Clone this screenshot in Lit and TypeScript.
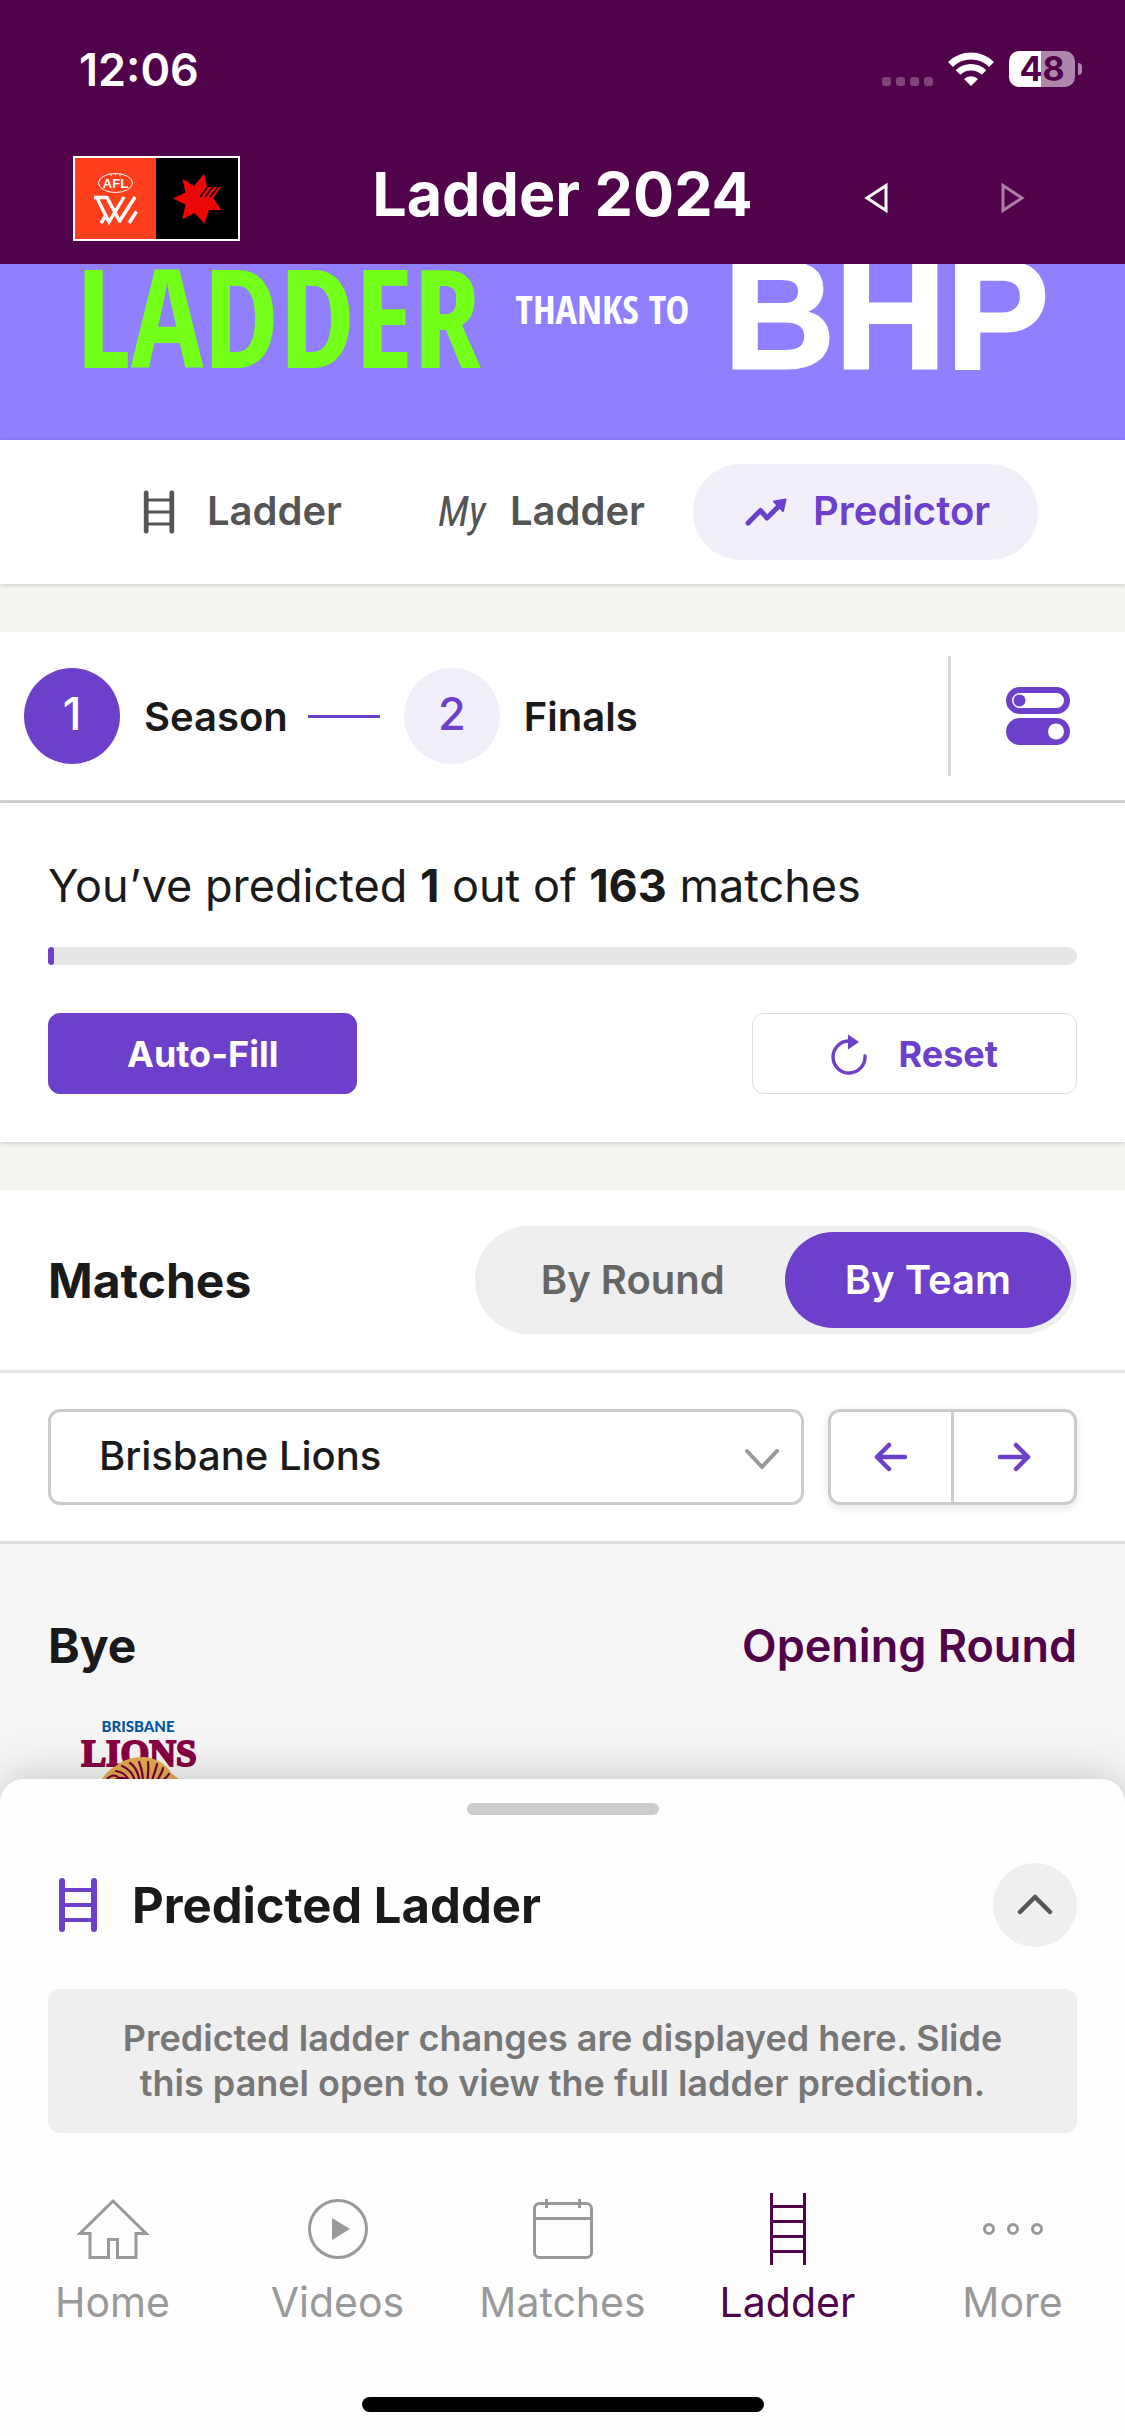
import { LitElement, html, css, svg } from "lit";
import { customElement, property, state } from "lit/decorators.js";
import { classMap } from "lit/directives/class-map.js";

const ladderIcon = html`<svg viewBox="0 0 60 60" fill="none" stroke="currentColor" aria-hidden="true">
  <path d="M14 6V54M46 6V54" stroke-width="6" stroke-linecap="round" />
  <path d="M14 15H46M14 30H46M14 45H46" stroke-width="4" />
</svg>`;

const trendIcon = html`<svg viewBox="0 0 48 48" fill="none" stroke="currentColor" aria-hidden="true">
  <path d="M7 35L19.500 22.500L26 30L39 17" stroke-width="5" stroke-linecap="round" stroke-linejoin="round" />
  <path d="M33 13.500L44.500 11.500L42 23Z" fill="currentColor" stroke-width="2" stroke-linejoin="round" />
</svg>`;

const navIcons: Record<string, unknown> = {
  Home: svg`<path d="M36 8L69 40.500H59V64.500H40.500V46.500H31.500V64.500H13V40.500H3Z" />`,
  Videos: svg`<circle cx="36" cy="36" r="28.500" /><path d="M30 25L48 36L30 47Z" fill="currentColor" stroke="none" />`,
  Matches: svg`<rect x="7.500" y="10.500" width="57" height="54" rx="5" /><path d="M7.500 25.500H64.500M19.500 6V15M52.500 6V15" />`,
  Ladder: svg`<path d="M19.500 0V72M52.500 0V72M19.500 13.500H52.500M19.500 28.500H52.500M19.500 43.500H52.500M19.500 58.500H52.500" />`,
  More: svg`<circle cx="12" cy="36" r="4.500" /><circle cx="36" cy="36" r="4.500" /><circle cx="60" cy="36" r="4.500" />`,
};

@customElement("status-bar")
export class StatusBar extends LitElement {
  static styles = css`
    :host { display: flex; align-items: center; justify-content: space-between; height: 126px; padding: 6px 43px 0 79px; color: #fff; }
    .time { font-size: 45px; font-weight: 600; }
    .signals { display: flex; align-items: center; }
    .dots { display: flex; gap: 5px; margin: 24px 15px 0 0; }
    .dot { width: 9px; height: 9px; border-radius: 3px; background: #7f4579; }
    .wifi { width: 46px; height: 34px; margin-right: 15px; }
    .battery { width: 66px; height: 36px; border-radius: 10px; background: linear-gradient(90deg, #fff 48%, #ae85ab 48%); color: #50034a; font-size: 34px; font-weight: 700; line-height: 36px; text-align: center; }
    .nub { width: 4px; height: 12px; margin-left: 3px; border-radius: 0 4px 4px 0; background: #ae85ab; }
  `;
  render() {
    return html`
      <span class="time">12:06</span>
      <div class="signals">
        <div class="dots">${[0, 1, 2, 3].map(() => html`<span class="dot"></span>`)}</div>
        <svg class="wifi" viewBox="0 0 46 34" fill="none" stroke="#fff" aria-label="Wi-Fi">
          <path d="M2.500 12.500A29 29 0 0 1 43.500 12.500" stroke-width="7" />
          <path d="M10 20.500A18.500 18.500 0 0 1 36 20.500" stroke-width="6.500" />
          <path d="M23 34L16 27A10 10 0 0 1 30 27Z" fill="#fff" stroke="none" />
        </svg>
        <span class="battery">48</span><span class="nub"></span>
      </div>
    `;
  }
}

@customElement("title-bar")
export class TitleBar extends LitElement {
  static styles = css`
    :host { display: grid; grid-template-columns: 1fr auto 1fr; align-items: center; height: 132px; padding: 0 44px 0 73px; color: #fff; }
    .logo { display: block; width: 167px; height: 85px; }
    h1 { margin: 0; padding: 0 29px 8px 0; font-size: 61px; font-weight: 700; line-height: 72px; }
    .pager { display: flex; justify-content: flex-end; }
    button { display: flex; justify-content: center; align-items: center; width: 137px; height: 96px; padding: 0; border: 0; background: none; color: #fff; }
    button:disabled { color: #ab7ea7; }
    .tri { width: 24px; height: 32px; }
    .afl { font: 700 13px "Liberation Sans", sans-serif; }
  `;
  render() {
    return html`
      <a href="#competition" aria-label="Competition">
        <svg class="logo" viewBox="0 0 167 85" aria-hidden="true">
          <rect width="167" height="85" fill="#fff" />
          <rect x="2" y="2" width="81" height="81" fill="#ff3e1d" />
          <rect x="83" y="2" width="82" height="81" fill="#000" />
          <g fill="none" stroke="#fff">
            <ellipse cx="42.500" cy="27" rx="17" ry="9.500" />
            <path d="M38 17.500V20M42.500 17V19.500M47 17.500V20" stroke-width=".7" />
            <path d="M21 41.500H34L47 66M24 42L36 66L51 41M46 66L62 41M28 67L33 59M56 67L63.500 55.500" stroke-width="3.400" />
          </g>
          <text class="afl" x="42.500" y="31.500" text-anchor="middle" fill="#fff">AFL</text>
          <path d="M131 17.700L121 30L109.400 22.700L112.500 36.500L100 42.500L112.500 48.500L109.400 63.300L121.500 57L131.700 67.700L136 54L148.500 54L140 42L148 31H134Z" fill="#ec0606" />
          <path d="M127 41L136 29M132 41L141.500 29M137 41L146.500 29" stroke="#000" stroke-width="1.300" />
        </svg>
      </a>
      <h1>Ladder 2024</h1>
      <div class="pager">
        <button aria-label="Previous season">
          <svg class="tri" viewBox="0 0 24 32" fill="none" stroke="currentColor" stroke-width="3"><path d="M22 3.500V28.500L3 16Z" /></svg>
        </button>
        <button aria-label="Next season" disabled>
          <svg class="tri" viewBox="0 0 24 32" fill="none" stroke="currentColor" stroke-width="3"><path d="M2 3.500V28.500L21 16Z" /></svg>
        </button>
      </div>
    `;
  }
}

@customElement("sponsor-banner")
export class SponsorBanner extends LitElement {
  static styles = css`
    :host { display: flex; align-items: baseline; justify-content: space-between; height: 176px; padding: 0 76px; overflow: hidden; box-sizing: border-box; background: #907fff; color: #fff; white-space: nowrap; }
    .ladder { color: #73ff17; font: 800 136px/102px "Open Sans Condensed", "Roboto Condensed", sans-serif; }
    .thanks { align-self: flex-start; font: 800 40px/90px "Open Sans Condensed", "Roboto Condensed", sans-serif; }
    .bhp { font: 700 154px/102px "Liberation Sans", Arial, sans-serif; -webkit-text-stroke: 3px #fff; }
  `;
  render() {
    return html`<span class="ladder">LADDER</span><span class="thanks">THANKS TO</span><span class="bhp">BHP</span>`;
  }
}

@customElement("view-tabs")
export class ViewTabs extends LitElement {
  @state() private active = "predictor";
  static styles = css`
    :host { display: flex; justify-content: center; padding: 24px 0; background: #fff; box-shadow: 0 1px 5px rgba(0, 0, 0, 0.2); }
    button { display: flex; align-items: center; gap: 24px; height: 96px; padding: 0 48px; border: 0; border-radius: 48px; background: none; color: #555; font: 600 40px Inter, sans-serif; }
    .on { background: #f3effa; color: #6c40ca; }
    .icon { display: flex; justify-content: center; width: 48px; }
    .label { padding-bottom: 4px; }
    svg { width: 48px; height: 48px; }
    .my { font: italic 400 42px/48px "Roboto Condensed", Roboto, sans-serif; }
  `;
  render() {
    const tabs = [
      { id: "ladder", label: "Ladder", icon: ladderIcon },
      { id: "my", label: "Ladder", icon: html`<span class="my">My</span>` },
      { id: "predictor", label: "Predictor", icon: trendIcon },
    ];
    return tabs.map(
      (t) => html`<button class=${classMap({ on: t.id === this.active })} aria-pressed=${t.id === this.active} @click=${() => (this.active = t.id)}>
        <span class="icon">${t.icon}</span><span class="label">${t.label}</span>
      </button>`,
    );
  }
}

@customElement("season-steps")
export class SeasonSteps extends LitElement {
  static styles = css`
    :host { display: flex; align-items: center; height: 168px; padding-left: 24px; border-bottom: 3px solid #d5d5d5; background: #fff; }
    .step { display: flex; align-items: center; gap: 24px; padding: 0; border: 0; background: none; color: #1a1a1a; font: 600 40px Inter, sans-serif; }
    .num { width: 96px; height: 96px; padding-bottom: 4px; box-sizing: border-box; border-radius: 50%; background: #f3effa; color: #6c40ca; font-size: 45px; font-weight: 500; line-height: 92px; text-align: center; }
    .on .num { background: #6c40ca; color: #fff; }
    .link { width: 72px; height: 3px; margin: 0 24px 0 20px; background: #6c40ca; }
    .divider { width: 3px; height: 120px; margin-left: auto; background: #d9d9d9; }
    .settings { display: flex; justify-content: center; width: 174px; padding: 0; border: 0; background: none; color: #6c40ca; }
    .settings svg { width: 64px; height: 59px; }
  `;
  render() {
    return html`
      <button class="step on"><span class="num">1</span>Season</button>
      <span class="link"></span>
      <button class="step"><span class="num">2</span>Finals</button>
      <span class="divider"></span>
      <button class="settings" aria-label="Settings">
        <svg viewBox="0 0 64 59" fill="currentColor">
          <rect x="3" y="3" width="58" height="21" rx="10.500" fill="none" stroke="currentColor" stroke-width="6" />
          <circle cx="13.500" cy="13.500" r="6" />
          <rect y="31" width="64" height="27" rx="13.500" />
          <circle cx="50" cy="44.500" r="8" fill="#fff" />
        </svg>
      </button>
    `;
  }
}

@customElement("prediction-progress")
export class PredictionProgress extends LitElement {
  @property({ type: Number }) done = 1;
  @property({ type: Number }) total = 163;
  static styles = css`
    :host { display: block; padding: 48px; background: #fff; box-shadow: 0 1px 5px rgba(0, 0, 0, 0.2); color: #1a1a1a; }
    p { margin: 0; font-size: 45px; line-height: 70px; }
    .track { height: 18px; margin: 26px 0 48px; border-radius: 3px 9px 9px 3px; background: #e6e6e6; overflow: hidden; }
    .fill { height: 18px; border-radius: 3px; background: #6c40ca; }
    .actions { display: flex; justify-content: space-between; }
    button { display: flex; align-items: center; justify-content: center; gap: 32px; height: 81px; padding: 0 78px; border: 1px solid #ddd; border-radius: 12px; background: #fff; color: #6c40ca; font: 700 36px Inter, sans-serif; }
    .primary { border-color: #6c40ca; background: #6c40ca; color: #fff; }
    svg { width: 36px; height: 42px; }
  `;
  render() {
    return html`
      <p>You’ve predicted <b>${this.done}</b> out of <b>${this.total}</b> matches</p>
      <div class="track" role="progressbar" aria-label="Matches predicted" aria-valuenow=${this.done} aria-valuemax=${this.total}>
        <div class="fill" style="width:${(this.done / this.total) * 100}%"></div>
      </div>
      <div class="actions">
        <button class="primary">Auto-Fill</button>
        <button>
          <svg viewBox="0 0 36 42" fill="none" stroke="currentColor" aria-hidden="true">
            <path d="M18 8A16 16 0 1 0 34 23" stroke-width="3.400" stroke-linecap="round" />
            <path d="M17 1.500L28 9L17 16.500Z" fill="currentColor" stroke="none" />
          </svg>
          Reset
        </button>
      </div>
    `;
  }
}

@customElement("match-filter")
export class MatchFilter extends LitElement {
  @state() private mode = "By Team";
  static styles = css`
    :host { display: block; background: #fff; color: #1a1a1a; }
    .head { display: flex; align-items: center; justify-content: space-between; height: 180px; padding: 0 48px; border-bottom: 3px solid #e6e6e6; }
    h2 { margin: 0; font-size: 48px; font-weight: 700; }
    .segment { display: flex; padding: 6px; border-radius: 54px; background: #efefef; }
    .segment button { height: 96px; padding: 0 60px 2px; border: 0; border-radius: 48px; background: none; color: #666; font: 600 40px Inter, sans-serif; }
    .segment .on { background: #6c40ca; color: #fff; }
    .row { display: flex; gap: 24px; padding: 36px 48px; border-bottom: 3px solid #ddd; }
    .pick { position: relative; flex: 1; }
    select { display: block; width: 100%; height: 96px; padding: 0 96px 4px 48px; border: 3px solid #ccc; border-radius: 12px; appearance: none; background: #fff; color: #1a1a1a; font: 500 40px Inter, sans-serif; }
    .chev { position: absolute; right: 24px; top: 39px; width: 36px; height: 22px; color: #999; pointer-events: none; }
    .pager { display: flex; width: 249px; height: 96px; box-sizing: border-box; border: 3px solid #ccc; border-radius: 12px; box-shadow: 0 3px 8px rgba(0, 0, 0, 0.1); }
    .pager button { display: flex; flex: 1; align-items: center; justify-content: center; padding: 0; border: 0; background: none; color: #6c40ca; }
    .pager button + button { border-left: 3px solid #ccc; }
    .pager svg { width: 34px; height: 30px; }
  `;
  render() {
    return html`
      <div class="head">
        <h2>Matches</h2>
        <div class="segment">
          ${["By Round", "By Team"].map((m) => html`<button class=${classMap({ on: m === this.mode })} aria-pressed=${m === this.mode} @click=${() => (this.mode = m)}>${m}</button>`)}
        </div>
      </div>
      <div class="row">
        <div class="pick">
          <select aria-label="Team"><option>Brisbane Lions</option></select>
          <svg class="chev" viewBox="0 0 36 22" fill="none" stroke="currentColor" stroke-width="4" stroke-linecap="round" stroke-linejoin="round" aria-hidden="true"><path d="M3 3L18 19L33 3" /></svg>
        </div>
        <div class="pager">
          <button aria-label="Previous team">
            <svg viewBox="0 0 34 30" fill="none" stroke="currentColor" stroke-width="4.500" stroke-linecap="round" stroke-linejoin="round"><path d="M31 15H3M15 3L3 15L15 27" /></svg>
          </button>
          <button aria-label="Next team">
            <svg viewBox="0 0 34 30" fill="none" stroke="currentColor" stroke-width="4.500" stroke-linecap="round" stroke-linejoin="round"><path d="M3 15H31M19 3L31 15L19 27" /></svg>
          </button>
        </div>
      </div>
    `;
  }
}

@customElement("bye-card")
export class ByeCard extends LitElement {
  static styles = css`
    :host { display: block; padding: 72px 48px 0; color: #1a1a1a; }
    .top { display: flex; align-items: center; justify-content: space-between; line-height: 60px; }
    h3 { margin: 0; font-size: 48px; font-weight: 700; }
    .round { color: #50034a; font-size: 45px; font-weight: 600; }
    .crest { display: block; width: 136px; height: 136px; margin: 38px 0 0 24px; }
    .city { font: 900 15px Lato, sans-serif; }
    .club { font: 700 37px "Liberation Serif", serif; }
  `;
  render() {
    return html`
      <div class="top"><h3>Bye</h3><span class="round">Opening Round</span></div>
      <svg class="crest" viewBox="0 0 136 136" role="img" aria-label="Brisbane Lions">
        <text class="city" x="66" y="18" text-anchor="middle" fill="#0054a0">BRISBANE</text>
        <text class="club" x="67" y="52" text-anchor="middle" fill="#870042" stroke="#870042" stroke-width="2">LIONS</text>
        <path d="M29 66C34 60 37 55 44 52C51 46 60 43 72 43C85 44 94 50 99 59L107 65L106 110H29Z" fill="#e3ad52" />
        <g fill="none" stroke="#7a003c" stroke-width="2.200" stroke-linecap="round">
          <path d="M33 68C38 60 45 58 52 70M44 57C51 58 56 62 58 70M50 52C58 55 62 61 64 70M58 49C64 53 67 61 68 70M67 48C70 55 71 62 71 70M76 48C77 55 76 62 75 70M85 50C84 56 81 62 79 70M91 54C90 60 86 64 83 70M97 60C94 65 89 67 87 70M103 67L94 70" />
        </g>
        <path d="M40 68C46 59 56 63 62 68Z" fill="#7a003c" />
      </svg>
    `;
  }
}

@customElement("ladder-sheet")
export class LadderSheet extends LitElement {
  static styles = css`
    :host { display: block; position: relative; margin-top: -24px; padding: 24px 48px 0; border-radius: 24px 24px 0 0; background: #fefefe; box-shadow: 0 0 48px rgba(0, 0, 0, 0.22); color: #1a1a1a; }
    .grip { width: 192px; height: 12px; margin: 0 auto 48px; border-radius: 6px; background: #ccc; }
    .head { display: flex; align-items: center; gap: 24px; }
    .ladder { width: 60px; height: 60px; color: #6c40ca; }
    .ladder svg { display: block; }
    h2 { flex: 1; margin: 0; font-size: 49px; font-weight: 700; }
    button { display: flex; align-items: center; justify-content: center; width: 84px; height: 84px; padding: 0; border: 0; border-radius: 50%; background: #efefef; color: #555; }
    button svg { width: 36px; height: 22px; }
    .note { margin: 42px 0 0; padding: 27px 60px; border-radius: 12px; background: #efefef; color: #777; font-size: 36px; font-weight: 600; line-height: 45px; text-align: center; }
  `;
  render() {
    return html`
      <div class="grip"></div>
      <div class="head">
        <span class="ladder">${ladderIcon}</span>
        <h2>Predicted Ladder</h2>
        <button aria-label="Open predicted ladder">
          <svg viewBox="0 0 36 22" fill="none" stroke="currentColor" stroke-width="4.500" stroke-linecap="round" stroke-linejoin="round"><path d="M3 18L18 3L33 18" /></svg>
        </button>
      </div>
      <p class="note">Predicted ladder changes are displayed here. Slide this panel open to view the full ladder prediction.</p>
    `;
  }
}

@customElement("bottom-nav")
export class BottomNav extends LitElement {
  static styles = css`
    :host { display: block; position: relative; z-index: 1; padding: 60px 0 24px; background: #fefefe; }
    nav { display: grid; grid-template-columns: repeat(5, 1fr); }
    a { display: flex; flex-direction: column; align-items: center; gap: 12px; color: #999; font-size: 41px; line-height: 50px; text-decoration: none; }
    .on { color: #50034a; }
    svg { width: 72px; height: 72px; }
    .bar { width: 402px; height: 15px; margin: 70px auto 0; border-radius: 8px; background: #000; }
  `;
  render() {
    return html`
      <nav>
        ${Object.keys(navIcons).map(
          (name) => html`<a href="#${name.toLowerCase()}" class=${classMap({ on: name === "Ladder" })}>
            <svg viewBox="0 0 72 72" fill="none" stroke="currentColor" stroke-width="3" aria-hidden="true">${navIcons[name]}</svg>${name}
          </a>`,
        )}
      </nav>
      <div class="bar"></div>
    `;
  }
}

@customElement("app-root")
export class AppRoot extends LitElement {
  static styles = css`
    :host { display: flex; flex-direction: column; height: 100vh; overflow: hidden; background: #f6f5f1; font-family: Inter, "Liberation Sans", sans-serif; }
    header { background: #50034a; }
    main { display: flex; flex: 1; flex-direction: column; min-height: 0; overflow: hidden; }
    main > * { flex: none; }
    .gap { height: 48px; }
    .list { flex: 1 0 auto; background: #f6f6f6; }
  `;
  render() {
    return html`
      <header><status-bar></status-bar><title-bar></title-bar></header>
      <main>
        <sponsor-banner></sponsor-banner>
        <view-tabs></view-tabs>
        <div class="gap"></div>
        <season-steps></season-steps>
        <prediction-progress></prediction-progress>
        <div class="gap"></div>
        <match-filter></match-filter>
        <section class="list"><bye-card></bye-card></section>
      </main>
      <ladder-sheet></ladder-sheet>
      <bottom-nav></bottom-nav>
    `;
  }
}
